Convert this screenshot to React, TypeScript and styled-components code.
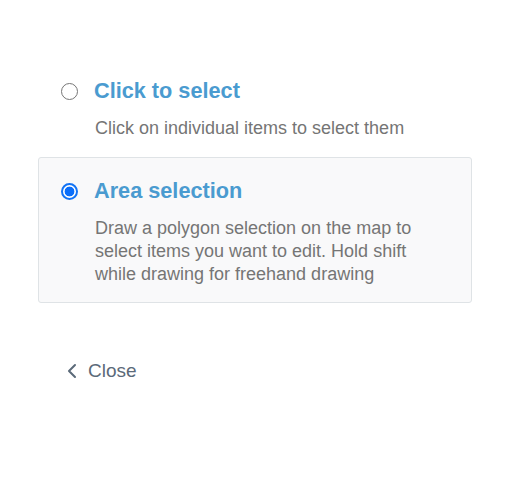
import React, { useState } from 'react';
import styled, { createGlobalStyle } from 'styled-components';
import { ChevronLeft } from 'lucide-react';

const GlobalStyle = createGlobalStyle`
  html, body {
    margin: 0;
    padding: 0;
    background: #ffffff;
    font-family: "Liberation Sans", Arial, sans-serif;
  }
`;

const Panel = styled.div`
  width: 511px;
  height: 502px;
  box-sizing: border-box;
  padding: 57px 39px 0 38px;
  display: flex;
  flex-direction: column;
`;

const OptionList = styled.div`
  display: flex;
  flex-direction: column;
`;

const Option = styled.div<{ $active: boolean }>`
  display: flex;
  flex-direction: column;
  padding: 21px 22px 16px 22px;
  border: 1px solid ${(p) => (p.$active ? '#dfe3e6' : 'transparent')};
  border-radius: 3px;
  background: ${(p) => (p.$active ? '#f9f9fa' : 'transparent')};
  cursor: pointer;
`;

const OptionHeader = styled.div`
  display: flex;
  align-items: center;
  gap: 16px;
  height: 24px;
`;

const Radio = styled.span<{ $checked: boolean }>`
  width: 17px;
  height: 17px;
  box-sizing: border-box;
  border-radius: 50%;
  flex-shrink: 0;
  border: ${(p) => (p.$checked ? '2px solid #1273f5' : '1.5px solid #767676')};
  background: ${(p) => (p.$checked ? 'radial-gradient(circle, #0a6efa 0 4.6px, #ffffff 5.2px)' : '#ffffff')};
`;

const Title = styled.span`
  font-size: 21.7px;
  font-weight: bold;
  color: #4a9bd0;
  line-height: 24px;
`;

const Description = styled.p`
  margin: 14px 0 0 34px;
  font-size: 18px;
  line-height: 23px;
  color: #757575;
  max-width: 330px;
`;

const CloseButton = styled.button`
  margin: 56px 0 0 22px;
  align-self: flex-start;
  display: flex;
  align-items: center;
  gap: 4px;
  padding: 0;
  border: none;
  background: none;
  font-family: inherit;
  font-size: 19px;
  color: #5b6a79;
  cursor: pointer;
`;

const options = [
  {
    id: 'click',
    title: 'Click to select',
    description: 'Click on individual items to select them',
  },
  {
    id: 'area',
    title: 'Area selection',
    description:
      'Draw a polygon selection on the map to select items you want to edit. Hold shift while drawing for freehand drawing',
  },
];

export default function App() {
  const [selected, setSelected] = useState('area');

  return (
    <>
      <GlobalStyle />
      <Panel>
        <OptionList>
          {options.map((o) => (
            <Option key={o.id} $active={selected === o.id} onClick={() => setSelected(o.id)}>
              <OptionHeader>
                <Radio $checked={selected === o.id} />
                <Title>{o.title}</Title>
              </OptionHeader>
              <Description>{o.description}</Description>
            </Option>
          ))}
        </OptionList>
        <CloseButton>
          <ChevronLeft size={24} strokeWidth={2} />
          Close
        </CloseButton>
      </Panel>
    </>
  );
}
